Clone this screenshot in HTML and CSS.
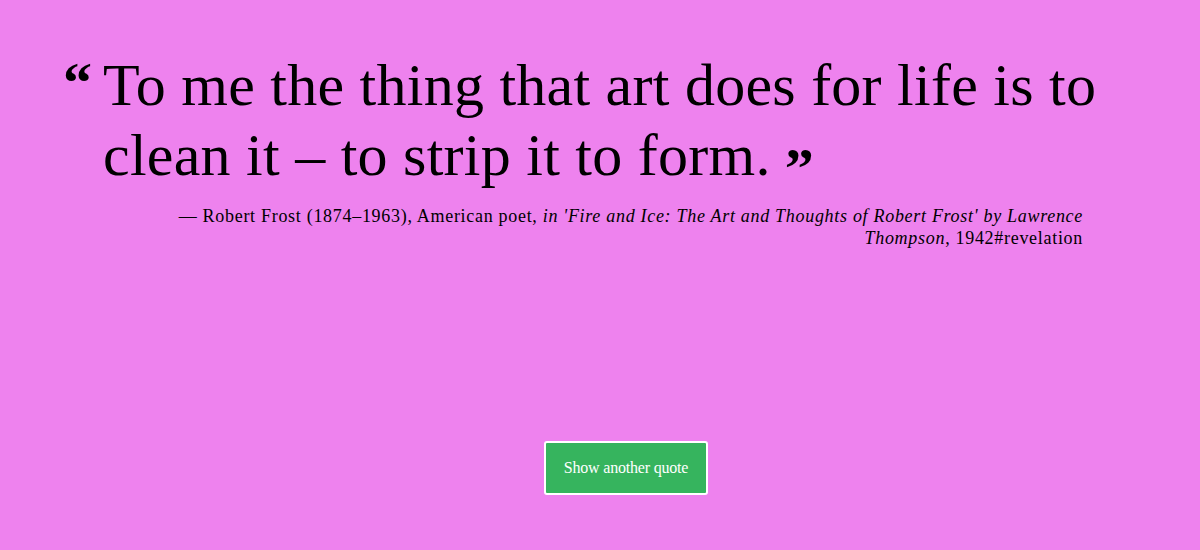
FILE: index.html
```html
<!DOCTYPE html>
<html>
<head>
<meta charset="utf-8">
<link rel="stylesheet" href="styles.css">
</head>
<body>
<main class="page">
  <section class="quote-box">
    <blockquote class="quote">
      <span class="mark open">&ldquo;</span><p class="text">To me the thing that art does for life is to clean it – to strip it to form.<span class="mark close">&rdquo;</span></p>
    </blockquote>
    <p class="author">— Robert Frost (1874–1963), American poet, <em>in 'Fire and Ice: The Art and Thoughts of Robert Frost' by Lawrence Thompson</em>, 1942#revelation</p>
  </section>
  <div class="actions">
    <button class="btn">Show another quote</button>
  </div>
</main>
</body>
</html>
```
FILE: styles.css
```css
html, body {
  margin: 0;
  padding: 0;
  height: 100%;
  background: #ee82ee;
}
body {
  font-family: "Liberation Serif", "DejaVu Serif", serif;
  color: #000;
}
.page {
  display: flex;
  flex-direction: column;
  height: 550px;
}
.quote-box {
  margin: 50px 0 0 63px;
  width: 1020px;
}
.quote {
  margin: 0;
  display: flex;
  align-items: flex-start;
  width: 1060px;
}
.mark {
  font-weight: bold;
  font-size: 58px;
  line-height: 1;
}
.mark.open {
  width: 40px;
  flex: none;
  margin-top: 4px;
}
.mark.close {
  margin-left: 14px;
  line-height: 0;
  vertical-align: -13px;
}
.text {
  margin: 0;
  font-size: 60px;
  line-height: 70px;
  letter-spacing: 0.25px;
}
.author {
  margin: 15px 0 0;
  padding-left: 100px;
  text-align: right;
  font-size: 18px;
  line-height: 22px;
  letter-spacing: 0.7px;
}
.author em {
  font-style: italic;
}
.actions {
  margin-top: 192px;
  padding-left: 544px;
}
.btn {
  width: 164px;
  height: 54px;
  background: #36b45e;
  color: #fff;
  border: 2px solid #fff;
  border-radius: 3px;
  font-family: "Liberation Serif", serif;
  font-size: 16px;
  letter-spacing: -0.2px;
}
```
